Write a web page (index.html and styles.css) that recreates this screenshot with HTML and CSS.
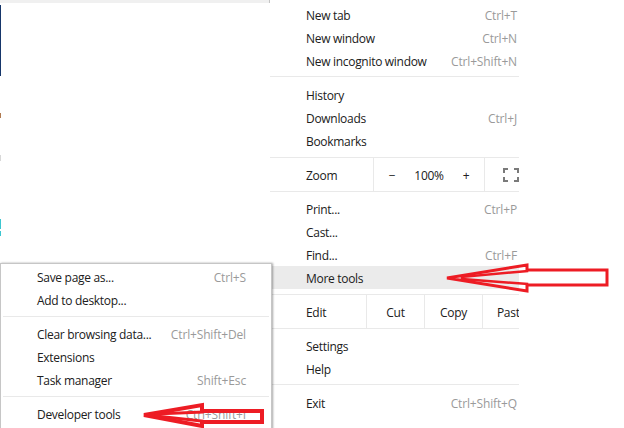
FILE: index.html
```html
<!DOCTYPE html>
<html>
<head>
<meta charset="utf-8">
<link rel="stylesheet" href="styles.css">
</head>
<body>
<div class="page">
  <div class="topbar"></div>
  <div class="edge">
    <div class="navy"></div>
    <div class="mark orange"></div>
    <div class="mark grey"></div>
    <div class="mark cyan"></div>
    <div class="mark cyan short"></div>
  </div>
</div>

<div class="menu main">
  <div class="inner">
    <div class="row"><span>New tab</span><span class="key">Ctrl+T</span></div>
    <div class="row"><span>New window</span><span class="key">Ctrl+N</span></div>
    <div class="row"><span>New incognito window</span><span class="key">Ctrl+Shift+N</span></div>
    <div class="sep"></div>
    <div class="row"><span>History</span></div>
    <div class="row"><span>Downloads</span><span class="key">Ctrl+J</span></div>
    <div class="row"><span>Bookmarks</span></div>
    <div class="split zoom">
      <span class="label zl">Zoom</span>
      <span class="cell minus">−</span>
      <span class="cell pct">100%</span>
      <span class="cell plus">+</span>
      <span class="cell fs">
        <svg width="16" height="14" viewBox="0 0 16 14"><path d="M1 5V1h4M11 1h4v4M15 9v4h-4M5 13H1V9" fill="none" stroke="#7a7a7a" stroke-width="2"/></svg>
      </span>
    </div>
    <div class="row"><span>Print...</span><span class="key">Ctrl+P</span></div>
    <div class="row"><span>Cast...</span></div>
    <div class="row"><span>Find...</span><span class="key">Ctrl+F</span></div>
    <div class="row active"><span>More tools</span></div>
    <div class="split edit">
      <span class="label el">Edit</span>
      <span class="cell ec">Cut</span>
      <span class="cell ec">Copy</span>
      <span class="cell ec">Paste</span>
    </div>
    <div class="row"><span>Settings</span></div>
    <div class="row"><span>Help</span></div>
    <div class="sep last"></div>
    <div class="row"><span>Exit</span><span class="key">Ctrl+Shift+Q</span></div>
  </div>
</div>

<div class="menu sub">
  <div class="row"><span>Save page as...</span><span class="key">Ctrl+S</span></div>
  <div class="row"><span>Add to desktop...</span></div>
  <div class="sep"></div>
  <div class="row"><span>Clear browsing data...</span><span class="key">Ctrl+Shift+Del</span></div>
  <div class="row"><span>Extensions</span></div>
  <div class="row"><span>Task manager</span><span class="key">Shift+Esc</span></div>
  <div class="sep"></div>
  <div class="row"><span>Developer tools</span><span class="key">Ctrl+Shift+I</span></div>
</div>

<svg class="arrows" width="624" height="428" viewBox="0 0 624 428">
  <g fill="none" stroke="#ed1c24" stroke-linejoin="miter" stroke-linecap="square">
    <polygon points="447,278 527,265 527,270 607,270 607,285 527,285 527,291" stroke-width="3"/>
    <polyline points="462,277 527,271" stroke-width="2.5"/>
    <polyline points="462,279 527,284" stroke-width="2.5"/>
    <polygon points="144,415 202,405 202,411 262,411 262,422 202,422 202,426" stroke-width="4"/>
    <polyline points="156,414 202,412" stroke-width="3"/>
    <polyline points="156,416 202,421" stroke-width="3"/>
  </g>
</svg>
</body>
</html>
```

FILE: styles.css
```css
html, body {
  margin: 0;
  padding: 0;
}
body {
  width: 624px;
  height: 428px;
  overflow: hidden;
  background: #ffffff;
  position: relative;
  font-family: "Open Sans", "Noto Sans", Arial, sans-serif;
  font-size: 12px;
  color: #202020;
}
.page {
  width: 270px;
}
.topbar {
  width: 269px;
  height: 3px;
  background: #f0f0f0;
  border-right: 1px solid #c4c4c4;
}
.edge {
  display: flex;
  flex-direction: column;
}
.navy {
  width: 1px;
  height: 71px;
  margin-top: 2px;
  background: #16366a;
}
.mark {
  width: 1px;
}
.orange {
  height: 5px;
  margin-top: 37px;
  background: #b07a50;
}
.grey {
  height: 6px;
  margin-top: 37px;
  background: #d8d8d8;
}
.cyan {
  height: 10px;
  margin-top: 58px;
  background: #3cc6d0;
}
.cyan.short {
  height: 5px;
  margin-top: 2px;
}

.menu {
  position: absolute;
  background: #ffffff;
}
.main {
  left: 270px;
  top: 0;
  width: 249px;
  height: 428px;
  overflow: hidden;
}
.main .inner {
  width: 272px;
  padding-top: 3px;
}
.row {
  box-sizing: border-box;
  height: 23px;
  display: flex;
  align-items: center;
  justify-content: space-between;
  padding: 2px 25px 0 36px;
  white-space: nowrap;
  letter-spacing: -0.3px;
}
.row.active {
  background: #ebebeb;
}
.key {
  color: #9a9a9a;
  letter-spacing: -0.15px;
}
.sep {
  height: 1px;
  background: #e9e9e9;
  margin: 4px 0 6px;
}
.split {
  display: flex;
  box-sizing: content-box;
  height: 31px;
  padding-top: 2px;
  border-top: 1px solid #e9e9e9;
  border-bottom: 1px solid #e9e9e9;
  white-space: nowrap;
  letter-spacing: -0.3px;
}
.zoom {
  margin: 5px 0 5px;
}
.edit {
  margin: 5px 0 5px;
}
.split > span {
  flex: none;
}
.label {
  display: flex;
  align-items: center;
  padding-left: 36px;
  box-sizing: border-box;
  border-right: 1px solid #e9e9e9;
  margin-top: -2px;
  padding-top: 2px;
}
.zl { width: 104px; }
.el { width: 97px; }
.cell {
  display: flex;
  align-items: center;
  justify-content: center;
}
.minus { width: 36px; }
.pct { width: 38px; }
.plus { width: 36px; border-right: 1px solid #e9e9e9; margin-top: -2px; padding-top: 2px; }
.fs { width: 40px; justify-content: flex-start; padding-left: 18px; padding-bottom: 2px; }
.ec {
  width: 57px;
  border-right: 1px solid #e9e9e9;
  margin-top: -2px;
  padding-top: 2px;
}

.sub {
  left: 0;
  top: 263px;
  width: 270px;
  height: 200px;
  border: 1px solid #c6c6c6;
  box-shadow: 1px 0 2px rgba(0, 0, 0, 0.35);
  padding-top: 1px;
}
.sub .sep {
  margin: 5px 2px 5px;
}

.arrows {
  position: absolute;
  left: 0;
  top: 0;
  pointer-events: none;
}
```
